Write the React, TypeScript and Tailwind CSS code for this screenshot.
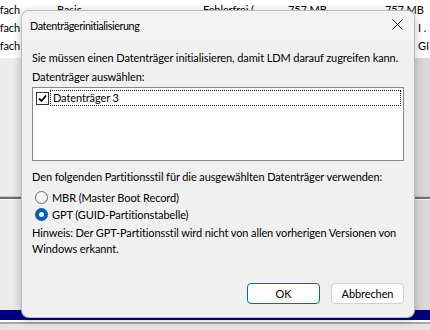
import React from 'react';

const FONT = "font-['Lato',sans-serif]";

const App: React.FC = () => {
  return (
    <div className={`relative w-[430px] h-[330px] overflow-hidden bg-white text-[11px] tracking-[-0.1px] text-black ${FONT}`}>
      {/* Background: disk management list view */}
      <div className="flex flex-col h-full">
        <div className="h-[58px] bg-white relative">
          <div className="absolute left-[-40px] top-[1px] w-[60px] text-right leading-[18px]">
            <div>Einfach</div>
            <div>Einfach</div>
            <div>Einfach</div>
          </div>
          <div className="absolute left-[57px] top-[1px] leading-[18px]">Basic</div>
          <div className="absolute left-[203px] top-[1px] leading-[18px]">Fehlerfrei (</div>
          <div className="absolute left-[288px] top-[1px] leading-[18px]">757 MB</div>
          <div className="absolute left-[385px] top-[1px] leading-[18px]">757 MB</div>
          <div className="absolute left-[418px] top-[19px] leading-[18px] whitespace-nowrap">
            <div>I .</div>
            <div>GI</div>
          </div>
        </div>
        <div className="h-[138px] bg-gradient-to-r from-[#ececec] via-[#e2e2e2] to-[#d8d8d8]" />
        <div className="h-[1px] bg-[#c8c8c8]" />
        <div className="h-[2px] bg-[#6e6e6e]" />
        <div className="h-[1px] bg-[#f4f4f4]" />
        <div className="h-[110px] bg-gradient-to-r from-[#ececec] via-[#e2e2e2] to-[#d8d8d8]" />
        <div className="h-[10px] bg-[#000080]" />
        <div className="h-[2px] bg-[#ffffff]" />
        <div className="h-[2px] bg-[#a8a8a8]" />
        <div className="flex-1 bg-[#e4e4e4]" />
      </div>

      {/* Dialog */}
      <div className="absolute left-[21px] top-[10px] w-[394px] h-[308px] rounded-[8px] bg-[#f0f0f0] border border-[#9a9a9a]/60 shadow-[0_2px_10px_rgba(0,0,0,0.25)] flex flex-col overflow-hidden">
        {/* Title bar */}
        <div className="h-[30px] flex items-center justify-between bg-[#f3f3f3] shrink-0">
          <span className="pl-[8px] text-[10.8px] tracking-[-0.4px] leading-[16px]">Datenträgerinitialisierung</span>
          <div className="w-[46px] h-[30px] flex items-center justify-center">
            <svg width="11" height="11" viewBox="0 0 11 11" className="mb-[4px] ml-[12px]">
              <path d="M0.5 0.5 L10.5 10.5 M10.5 0.5 L0.5 10.5" stroke="#1a1a1a" strokeWidth="1" fill="none" />
            </svg>
          </div>
        </div>

        {/* Body */}
        <div className="flex flex-col px-[10px] pt-[9px] leading-[16px] flex-1 whitespace-nowrap">
          <p className="h-[16px]">Sie müssen einen Datenträger initialisieren, damit LDM darauf zugreifen kann.</p>
          <p className="h-[16px] mt-[3px]">Datenträger auswählen:</p>

          <div className="mt-[2px] h-[74px] w-[372px] bg-white border border-[#828790] p-[1px]">
            <div className="flex items-center h-[16px] mt-[1px]">
              <div className="ml-[2px] w-[13px] h-[13px] border border-[#333] bg-white flex items-center justify-center shrink-0">
                <svg width="9" height="9" viewBox="0 0 9 9">
                  <path d="M1 4.5 L3.5 7 L8 1.5" stroke="#000" strokeWidth="1.8" fill="none" />
                </svg>
              </div>
              <div className="ml-[1px] flex-1 h-[16px] border border-dotted border-[#222] pl-[2px] leading-[14px] mr-[1px]">
                Datenträger 3
              </div>
            </div>
          </div>

          <p className="h-[16px] mt-[8px]">Den folgenden Partitionsstil für die ausgewählten Datenträger verwenden:</p>

          <div className="flex items-center h-[17px] mt-[4px] pl-[3px]">
            <span className="w-[13px] h-[13px] rounded-full border border-[#6a6a6a] bg-[#f7f7f7] shrink-0" />
            <span className="ml-[4px]">MBR (Master Boot Record)</span>
          </div>
          <div className="flex items-center h-[17px] pl-[3px]">
            <span className="w-[13px] h-[13px] rounded-full bg-[#005fb8] flex items-center justify-center shrink-0">
              <span className="w-[5px] h-[5px] rounded-full bg-white" />
            </span>
            <span className="ml-[4px]">GPT (GUID-Partitionstabelle)</span>
          </div>

          <p className="mt-[2px]">Hinweis: Der GPT-Partitionsstil wird nicht von allen vorherigen Versionen von</p>
          <p>Windows erkannt.</p>

          <div className="mt-auto mb-[13px] flex justify-end gap-[11px]">
            <button className="w-[73px] h-[21px] rounded-[4px] border border-[#0067c0] bg-[#fdfdfd] leading-[18px]">OK</button>
            <button className="w-[73px] h-[21px] rounded-[4px] border border-[#d0d0d0] bg-[#fdfdfd] leading-[18px]">Abbrechen</button>
          </div>
        </div>
      </div>
    </div>
  );
};

export default App;
